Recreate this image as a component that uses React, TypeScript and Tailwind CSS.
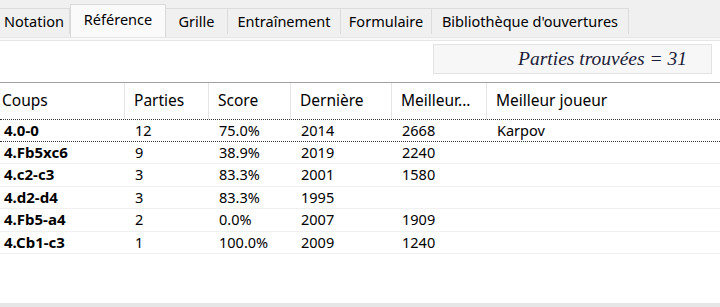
const tabs = [
  { label: 'Notation', w: 70, pl: 4 },
  { label: 'Référence', w: 96, active: true },
  { label: 'Grille', w: 62 },
  { label: 'Entraînement', w: 113 },
  { label: 'Formulaire', w: 91 },
  { label: "Bibliothèque d'ouvertures", w: 197 },
];

const columns = [
  { label: 'Coups', w: 125, pl: 2 },
  { label: 'Parties', w: 84 },
  { label: 'Score', w: 82 },
  { label: 'Dernière', w: 101 },
  { label: 'Meilleur...', w: 95 },
  { label: 'Meilleur joueur', w: 233 },
];

const rows = [
  ['4.0-0', '12', '75.0%', '2014', '2668', 'Karpov'],
  ['4.Fb5xc6', '9', '38.9%', '2019', '2240', ''],
  ['4.c2-c3', '3', '83.3%', '2001', '1580', ''],
  ['4.d2-d4', '3', '83.3%', '1995', '', ''],
  ['4.Fb5-a4', '2', '0.0%', '2007', '1909', ''],
  ['4.Cb1-c3', '1', '100.0%', '2009', '1240', ''],
];

const App = () => {
  return (
    <div className="w-[720px] h-[307px] bg-white overflow-hidden flex flex-col font-['Noto_Sans',sans-serif] text-black">
      {/* Tabs */}
      <div className="h-[37px] bg-[#f0f0f0] flex items-start shrink-0">
        {tabs.map((t) =>
          t.active ? (
            <div
              key={t.label}
              style={{ width: t.w }}
              className="mt-[4px] h-[33px] bg-[#fafafa] border border-b-0 border-[#d9d9d9] flex items-center justify-center text-[14.5px] pb-[3px]"
            >
              {t.label}
            </div>
          ) : (
            <div
              key={t.label}
              style={{ width: t.w, paddingLeft: t.pl }}
              className={`mt-[8px] h-[26px] bg-[#f0f0f0] border border-b-0 border-l-0 border-[#dcdcdc] flex items-center text-[14.5px] ${t.pl ? '' : 'justify-center'}`}
            >
              {t.label}
            </div>
          )
        )}
      </div>
      <div className="h-[4px] shrink-0 bg-[#f9f9f9] border-t border-b border-[#e6e6e6]" />

      {/* Result count */}
      <div className="h-[41px] shrink-0 flex justify-end items-start pt-[3px] pr-[8px]">
        <div className="w-[279px] h-[30px] bg-[#f7f7f7] border border-[#e3e3e3] flex items-center justify-end pr-[24px] font-['Liberation_Serif',serif] italic text-[19.5px] text-[#1c1c38]">
          Parties trouvées = 31
        </div>
      </div>

      {/* Table */}
      <div className="border-t border-[#a0a0a0] flex-1 flex flex-col">
        <div className="h-[36px] flex shrink-0">
          {columns.map((c, i) => (
            <div
              key={c.label}
              style={{ width: c.w, paddingLeft: c.pl ?? 9 }}
              className={`h-full flex items-center text-[15.5px] ${i < columns.length - 1 ? 'border-r border-[#e5e5e5]' : ''}`}
            >
              {c.label}
            </div>
          ))}
        </div>
        {rows.map((r, ri) => (
          <div
            key={ri}
            className={`h-[22.5px] flex items-baseline shrink-0 ${
              ri === 0
                ? 'border-y border-dotted border-[#333]'
                : 'border-b border-[#f0f0f0]'
            }`}
          >
            {r.map((cell, ci) => (
              <div
                key={ci}
                style={{ width: columns[ci].w, paddingLeft: ci === 0 ? 4 : 10 }}
                className={`leading-[21px] ${ci === 0 ? 'font-bold text-[15px]' : 'text-[14.5px]'}`}
              >
                {cell}
              </div>
            ))}
          </div>
        ))}
        <div className="flex-1" />
        <div className="h-[4px] shrink-0 bg-[#e6e6e6]" />
      </div>
    </div>
  );
};

export default App;
